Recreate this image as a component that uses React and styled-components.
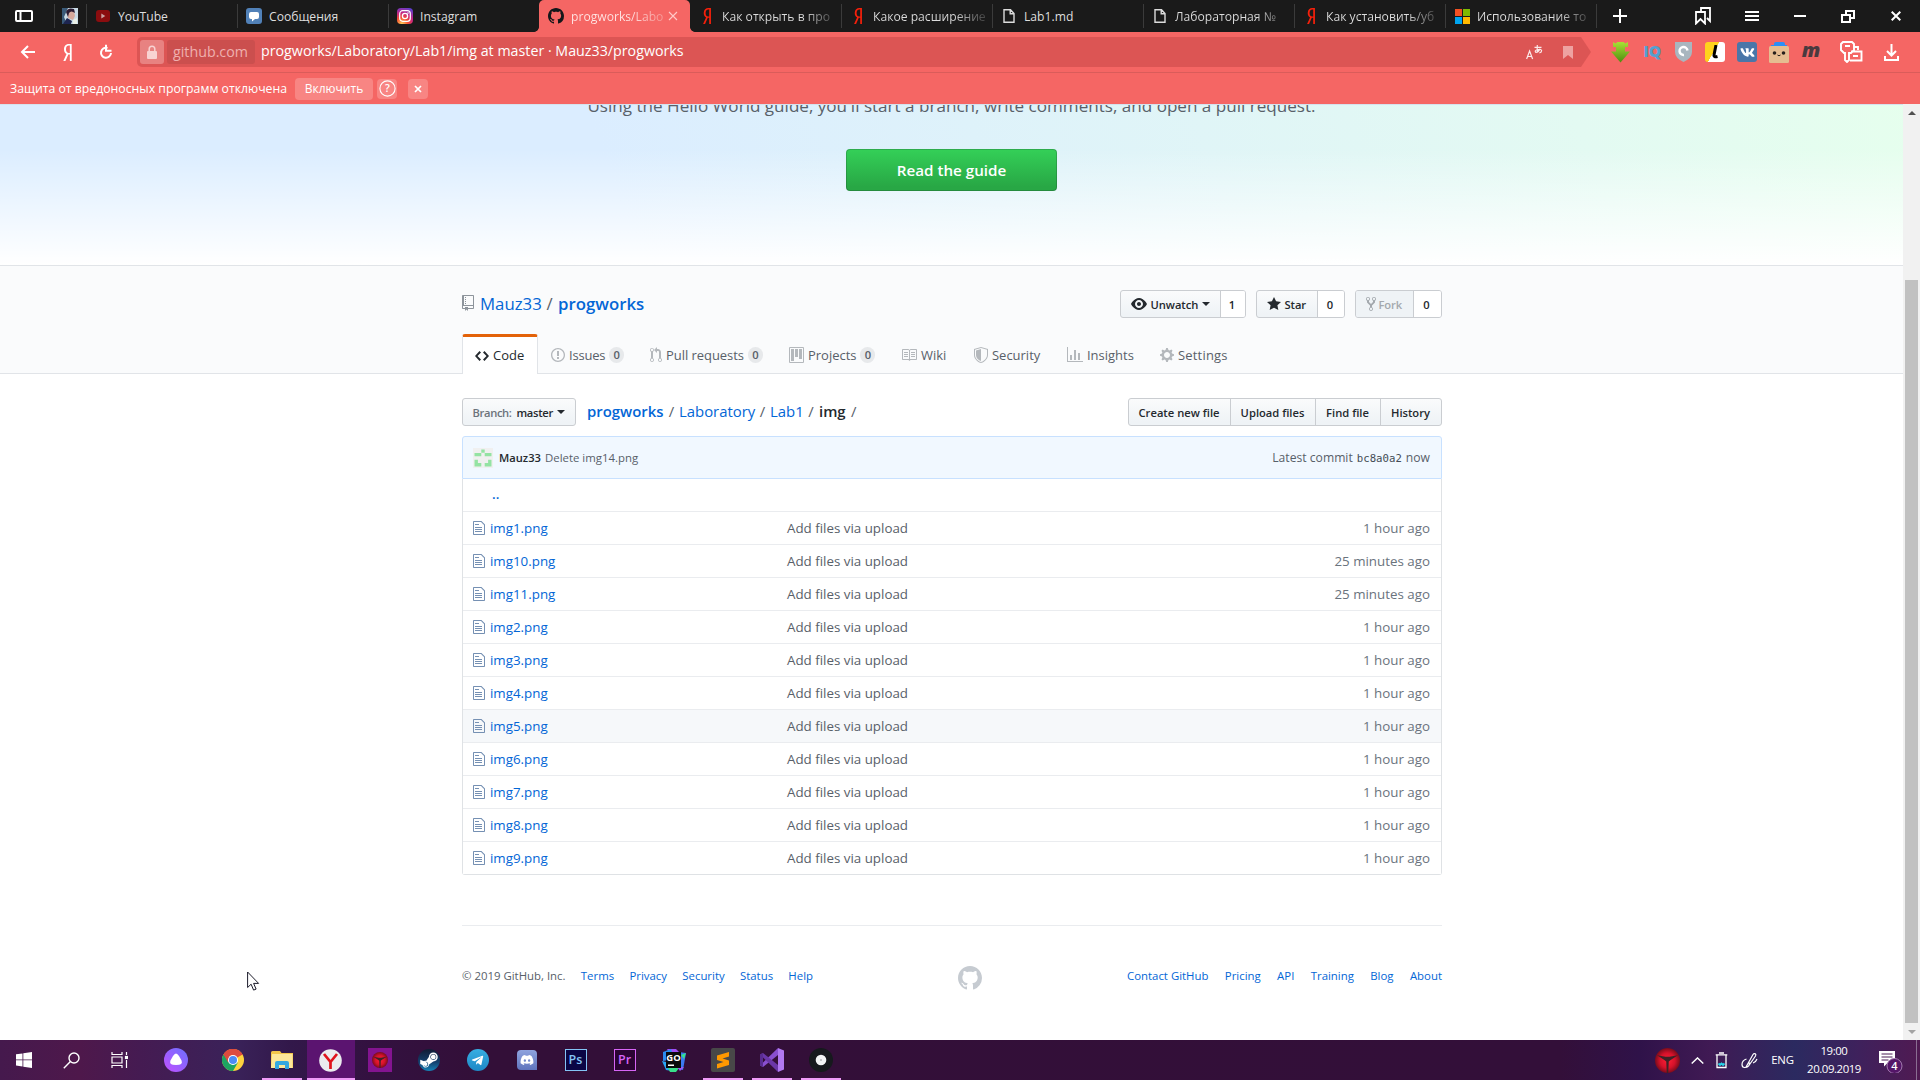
import React from 'react';
import styled, { createGlobalStyle, css } from 'styled-components';
import { FaYandex, FaSteamSymbol, FaTelegramPlane, FaDiscord, FaVk } from 'react-icons/fa';

const Global = createGlobalStyle`
  * { box-sizing: border-box; }
  body { margin: 0; background: #fff; overflow: hidden; }
  svg { display: block; flex: none; }
`;

const Screen = styled.div`
  position: relative;
  width: 1920px;
  height: 1080px;
  display: flex;
  flex-direction: column;
  overflow: hidden;
  font-family: "Open Sans", "Noto Sans", sans-serif;
  white-space: nowrap;
`;

/* ---------- browser chrome ---------- */
const TabStrip = styled.div`
  height: 32px;
  flex: none;
  display: flex;
  background: #1a1a1a;
`;
const PanelToggle = styled.div`
  width: 55px;
  height: 24px;
  margin: 4px 0;
  padding: 6px 0 0 15px;
  border-right: 1px solid #3b3b3b;
`;
const PinnedTab = styled.div`
  width: 31px;
  height: 24px;
  margin: 4px 0;
  padding: 4px 0 0 7px;
`;
const Tab = styled.div`
  position: relative;
  width: 151px;
  height: 32px;
  display: flex;
  align-items: center;
  padding: 0 0 0 9px;
  color: #dedede;
  font-size: 12.15px;
  &::before {
    content: '';
    position: absolute;
    left: 0;
    top: 4px;
    width: 1px;
    height: 24px;
    background: ${p => (p.$noLine ? 'transparent' : '#3b3b3b')};
  }
  ${p => p.$active && css`
    background: #f56664;
    color: #ffe5e4;
    border-radius: 5px 5px 0 0;
    &::before, &::after {
      content: '';
      position: absolute;
      bottom: 0;
      top: auto;
      width: 5px;
      height: 5px;
      left: -5px;
      background: radial-gradient(circle at 0 0, #1a1a1a 4.5px, #f56664 5.2px);
    }
    &::after {
      left: auto;
      right: -5px;
      background: radial-gradient(circle at 100% 0, #1a1a1a 4.5px, #f56664 5.2px);
    }
  `}
`;
const TabIcon = styled.div`
  width: 16px;
  height: 32px;
  display: flex;
  align-items: center;
  justify-content: center;
  flex: none;
`;
const TabTitle = styled.div`
  margin-left: 7px;
  flex: none;
  width: ${p => (p.$short ? 97 : 112)}px;
  line-height: 32px;
  padding-top: 1px;
  ${p => p.$fade && css`
    color: transparent;
    background: linear-gradient(90deg, ${p.$short ? '#ffe5e4 60%, #f79a98 92%' : '#dedede 72%, #4a4a4a 98%'});
    background-clip: text;
    -webkit-background-clip: text;
  `}
`;
const WindowButtons = styled.div`
  flex: 1;
  display: flex;
  align-items: center;
  padding-left: 16px;
  height: 24px;
  margin-top: 4px;
  border-left: 1px solid #3b3b3b;
`;
const WinBtn = styled.div`
  width: ${p => p.$w}px;
  flex: none;
`;

const Toolbar = styled.div`
  height: 41px;
  flex: none;
  display: flex;
  align-items: center;
  background: #f56664;
  border-bottom: 1px solid #da5c5a;
  color: #fff;
`;
const NavButtons = styled.div`
  width: 137px;
  display: flex;
  align-items: center;
  padding-left: 20px;
`;
const NavCell = styled.div`
  width: 41px;
  display: flex;
  & + & + & { padding-left: 1px; }
`;
const AddressBar = styled.div`
  width: 1454px;
  height: 30px;
  display: flex;
  align-items: center;
  background: #dc5554;
  border-radius: 5px 0 0 5px;
  clip-path: polygon(0 0, 1444px 0, 100% 50%, 1444px 100%, 0 100%);
  padding-left: 3px;
  font-size: 14.25px;
`;
const LockBox = styled.div`
  width: 24px;
  height: 24px;
  border-radius: 3px;
  background: #e88281;
  display: flex;
  align-items: center;
  justify-content: center;
`;
const Domain = styled.div`
  width: 88px;
  height: 24px;
  margin-left: 3px;
  border-radius: 3px;
  background: #cb4f4e;
  color: #efb0af;
  line-height: 23px;
  text-align: center;
  padding-right: 1px;
`;
const PageTitle = styled.div`
  margin-left: 6px;
  flex: 1;
  line-height: 28px;
  height: 30px;
`;
const BarIcons = styled.div`
  display: flex;
  align-items: center;
  gap: 20px;
  margin-right: 18px;
`;
const Extensions = styled.div`
  display: flex;
  padding-left: 13px;
`;
const ExtCell = styled.div`
  width: ${p => p.$w || 32}px;
  height: 32px;
  display: flex;
  align-items: center;
  justify-content: center;
`;
const LetterIcon = styled.div`
  font: ${p => p.$font};
  color: ${p => p.$c};
  letter-spacing: ${p => p.$ls || 0}px;
  transform: translateY(${p => p.$dy || 0}px);
`;

const InfoBar = styled.div`
  height: 31px;
  flex: none;
  display: flex;
  align-items: center;
  background: #f56664;
  color: #fff;
  font-size: 12.25px;
  padding-left: 10px;
`;
const InfoText = styled.div`width: 285px;`;
const InfoButton = styled.div`
  width: ${p => p.$w}px;
  height: ${p => p.$h}px;
  margin-right: ${p => p.$gap || 0}px;
  border-radius: 4px;
  background: #f88583;
  font-size: 12px;
  display: flex;
  align-items: center;
  justify-content: center;
`;

/* ---------- page ---------- */
const Viewport = styled.div`
  height: 936px;
  flex: none;
  display: flex;
`;
const Page = styled.div`
  width: 1903px;
  background: #fff;
  overflow: hidden;
`;
const Scrollbar = styled.div`
  width: 17px;
  background: #f1f1f1;
  display: flex;
  flex-direction: column;
  align-items: center;
`;
const ScrollArrow = styled.div`
  width: 17px;
  height: 17px;
  display: flex;
  align-items: center;
  justify-content: center;
`;
const ScrollTrack = styled.div`
  flex: 1;
  padding-top: 159px;
`;
const ScrollThumb = styled.div`
  width: 13px;
  height: 743px;
  background: #c1c1c1;
`;

const Hero = styled.div`
  height: 162px;
  border-bottom: 1px solid #e1e4e8;
  border-top: 1px solid #d5e2ee;
  background:
    linear-gradient(180deg, rgba(255,255,255,0) 60%, #fff) bottom / 100% 290px no-repeat,
    linear-gradient(70deg, #dbedff 32%, #e6ffed) bottom / 100% 290px no-repeat;
  display: flex;
  flex-direction: column;
  align-items: center;
  overflow: hidden;
`;
const HeroText = styled.div`
  margin-top: -12px;
  height: 26px;
  line-height: 26px;
  font-size: 17.08px;
  color: #586069;
  flex: none;
`;
const HeroButton = styled.div`
  margin-top: 30px;
  width: 211px;
  height: 42px;
  border-radius: 4px;
  border: 1px solid rgba(27,31,35,.2);
  background: linear-gradient(180deg, #34d058, #28a745 90%) border-box;
  color: #fff;
  font-weight: 600;
  font-size: 15.2px;
  line-height: 40px;
  text-align: center;
`;
const RepoHead = styled.div`
  height: 108px;
  background: #fafbfc;
  border-bottom: 1px solid #e1e4e8;
  padding: 24px 461px 0 462px;
`;
const HeadTop = styled.div`
  display: flex;
  justify-content: space-between;
  height: 44px;
`;
const RepoTitle = styled.div`
  display: flex;
  align-items: center;
  height: 26px;
  font-size: 16.8px;
  color: #586069;
`;
const Link = styled.span`
  color: #0366d6;
  font-weight: ${p => (p.$b ? 600 : 400)};
  width: ${p => (p.$w ? p.$w + 'px' : 'auto')};
  margin-left: ${p => p.$ml || 0}px;
`;
const Slash = styled.span`
  width: ${p => p.$w || 16}px;
  text-align: center;
`;
const Actions = styled.div`
  display: flex;
  gap: 10px;
`;
const Group = styled.div`
  display: flex;
  height: 28px;
  border: 1px solid #cacdd1;
  border-radius: 3px;
  overflow: hidden;
  background: linear-gradient(180deg, #fafbfc, #eff3f6 90%);
  font-size: 11.2px;
  font-weight: 600;
  color: #24292e;
`;
const Seg = styled.div`
  width: ${p => p.$w}px;
  display: flex;
  align-items: center;
  justify-content: center;
  padding-right: 1px;
  & + & { border-left: 1px solid #cacdd1; }
  ${p => p.$count && css`background: #fff; padding-right: 2px;`}
  ${p => p.$off && css`color: #a3a8ad; background: #eff3f6;`}
`;
const SegText = styled.span`
  width: ${p => p.$w}px;
  margin: 0 ${p => p.$mr || 0}px 0 ${p => p.$ml || 0}px;
  letter-spacing: ${p => p.$ls || 0}px;
  color: ${p => (p.$muted ? '#6c737b' : 'inherit')};
`;
const RepoNav = styled.div`
  display: flex;
  height: 40px;
  font-size: 12.98px;
  color: #586069;
`;
const NavItem = styled.div`
  display: flex;
  align-items: center;
  height: 39px;
  width: ${p => p.$w}px;
  padding: 3px 0 0 ${p => p.$pl || 0}px;
  color: ${p => (p.$on ? '#24292e' : '#586069')};
  ${p => p.$on && css`
    height: 40px;
    padding-top: 0;
    background: #fff;
    border: 1px solid #e1e4e8;
    border-top: 3px solid #e36209;
    border-bottom: 0;
    border-radius: 3px 3px 0 0;
  `}
`;
const NavText = styled.span`
  margin-left: ${p => p.$ml || 4}px;
  letter-spacing: ${p => p.$ls || 0}px;
  padding-bottom: 1px;
`;
const Counter = styled.span`
  margin-left: 4px;
  min-width: 15px;
  height: 16px;
  line-height: 16px;
  border-radius: 10px;
  background: #e7e9eb;
  text-align: center;
  font-size: 11.2px;
  font-weight: 600;
  color: #586069;
`;

const Body = styled.div`
  padding: 24px 461px 0 462px;
`;
const FileNav = styled.div`
  display: flex;
  height: 38px;
`;
const Crumbs = styled.div`
  flex: 1;
  height: 26px;
  display: flex;
  align-items: center;
  font-size: 14.9px;
  color: #586069;
  padding-left: 11px;
`;
const Current = styled.strong`
  font-weight: 600;
  color: #24292e;
`;
const Commit = styled.div`
  display: flex;
  align-items: center;
  height: 43px;
  padding: 0 11px 0 10px;
  background: #f1f8ff;
  border: 1px solid #c8e1ff;
  border-radius: 3px 3px 0 0;
  font-size: 11.4px;
  color: #586069;
`;
const Author = styled.span`
  margin-left: 6px;
  width: 46px;
  font-size: 11.15px;
  font-weight: 600;
  color: #24292e;
`;
const CommitMsg = styled.span`flex: 1;`;
const Latest = styled.span`
  font-size: 12.15px;
`;
const Sha = styled.span`
  font: 10.7px "DejaVu Sans Mono", "Liberation Mono", monospace;
  color: #444d56;
  margin: 0 4px;
`;
const Table = styled.div`
  border: 1px solid #dfe2e5;
  border-top: 0;
  border-radius: 0 0 3px 3px;
`;
const Row = styled.div`
  height: 33px;
  display: grid;
  grid-template-columns: 17px 297px 1fr auto;
  align-items: center;
  padding: 0 11px 0 10px;
  font-size: 13.35px;
  color: #6a737d;
  background: ${p => (p.$hover ? '#f6f8fa' : '#fff')};
  border-top: 1px solid #eaecef;
`;
const UpRow = styled.div`
  height: 32px;
  padding: 0 0 0 29px;
  line-height: 31px;
  font-size: 13.35px;
  font-weight: 600;
  color: #0366d6;
`;
const Message = styled.span`color: #586069;`;
const Footer = styled.div`
  margin-top: 50px;
  border-top: 1px solid #eaecef;
  padding-top: 40px;
  display: flex;
  justify-content: space-between;
  font-size: 11.4px;
  line-height: 20px;
  color: #586069;
`;
const FootLinks = styled.div`
  display: flex;
  width: 351px;
  justify-content: space-between;
`;
const FootRight = styled(FootLinks)`width: 315px;`;

/* ---------- taskbar ---------- */
const Taskbar = styled.div`
  height: 40px;
  flex: none;
  display: flex;
  background: linear-gradient(90deg, #45194d 0, #4e184b 80px, #451b52 140px, #3a2259 235px, #32184a 290px, #331140 370px, #330f38 480px, #330f39 1560px, #2f1249 1640px, #401a54 1710px, #2b2a60 1795px, #3f215c 1860px, #501a52 1920px);
`;
const Task = styled.div`
  width: ${p => p.$w || 49}px;
  height: 40px;
  display: flex;
  align-items: center;
  justify-content: center;
  background:
    linear-gradient(#ef9bf8, #ef9bf8) bottom / ${p => p.$bar || 0}px 2px no-repeat,
    linear-gradient(${p => (p.$tile ? '#5b1470, #5b1470' : 'transparent, transparent')}) center / 48px 40px no-repeat;
`;
const AppTile = styled.div`
  width: ${p => p.$s}px;
  height: ${p => p.$s}px;
  background: ${p => p.$bg};
  border: ${p => p.$border || '0'};
  border-radius: ${p => p.$r || 0};
  color: ${p => p.$c || '#fff'};
  display: flex;
  align-items: center;
  justify-content: center;
  font-size: 12.5px;
  line-height: 16px;
  font-weight: 600;
`;
const Tray = styled.div`
  flex: 1;
  display: flex;
  align-items: center;
  justify-content: flex-end;
  color: #fff;
`;
const TrayCell = styled.div`
  width: ${p => p.$w}px;
  display: flex;
  justify-content: center;
`;
const Lang = styled.div`
  width: 27px;
  text-align: center;
  font-size: 11.4px;
  letter-spacing: -0.3px;
  padding-bottom: 1px;
`;
const Clock = styled.div`
  width: 76px;
  text-align: center;
  font-size: 11.4px;
  letter-spacing: -0.42px;
  line-height: 18px;
`;
const ShowDesktop = styled.div`
  width: 4px;
  height: 40px;
  margin-left: 6px;
  border-left: 1px solid #8a6d92;
`;
const Pointer = styled.div`
  position: absolute;
  left: 247px;
  top: 971px;
`;

/* ---------- icons ---------- */
const P = {
  repo: [12, 'M4 9H3V8h1v1zm0-3H3v1h1V6zm0-2H3v1h1V4zm0-2H3v1h1V2zm8-1v12c0 .55-.45 1-1 1H6v2l-1.5-1.5L3 16v-2H1c-.55 0-1-.45-1-1V1c0-.55.45-1 1-1h10c.55 0 1 .45 1 1zm-1 10H1v2h2v-1h3v1h5v-2zm0-10H2v9h9V1z'],
  code: [14, 'M9.5 3L8 4.5 11.5 8 8 11.5 9.5 13 14 8 9.5 3zm-5 0L0 8l4.5 5L6 11.5 2.5 8 6 4.5 4.5 3z'],
  issue: [14, 'M7 2.3c3.14 0 5.7 2.56 5.7 5.7s-2.56 5.7-5.7 5.7A5.71 5.71 0 0 1 1.3 8c0-3.14 2.56-5.7 5.7-5.7zM7 1C3.14 1 0 4.14 0 8s3.14 7 7 7 7-3.14 7-7-3.14-7-7-7zm1 3H6v5h2V4zm0 6H6v2h2v-2z'],
  pr: [12, 'M11 11.28V5c-.03-.78-.34-1.47-.94-2.06C9.46 2.35 8.78 2.03 8 2H7V0L4 3l3 3V4h1c.27.02.48.11.69.31.21.2.3.42.31.69v6.28A1.993 1.993 0 0 0 10 15a1.993 1.993 0 0 0 1-3.72zm-1 2.92c-.66 0-1.2-.55-1.2-1.2 0-.65.55-1.2 1.2-1.2.65 0 1.2.55 1.2 1.2 0 .65-.55 1.2-1.2 1.2zM4 3c0-1.11-.89-2-2-2a1.993 1.993 0 0 0-1 3.72v6.56A1.993 1.993 0 0 0 2 15a1.993 1.993 0 0 0 1-3.72V4.72c.59-.34 1-.98 1-1.72zm-.8 10c0 .66-.55 1.2-1.2 1.2-.65 0-1.2-.55-1.2-1.2 0-.65.55-1.2 1.2-1.2.65 0 1.2.55 1.2 1.2zM2 4.2C1.34 4.2.8 3.65.8 3c0-.65.55-1.2 1.2-1.2.65 0 1.2.55 1.2 1.2 0 .65-.55 1.2-1.2 1.2z'],
  project: [15, 'M10 12h3V2h-3v10zm-4-2h3V2H6v8zm-4 4h3V2H2v12zm-1 1h13V1H1v14zM14 0H1a1 1 0 0 0-1 1v14a1 1 0 0 0 1 1h13a1 1 0 0 0 1-1V1a1 1 0 0 0-1-1z'],
  book: [16, 'M3 5h4v1H3V5zm0 3h4V7H3v1zm0 2h4V9H3v1zm11-5h-4v1h4V5zm0 2h-4v1h4V7zm0 2h-4v1h4V9zm2-6v9c0 .55-.45 1-1 1H9.5l-1 1-1-1H2c-.55 0-1-.45-1-1V3c0-.55.45-1 1-1h5.5l1 1 1-1H15c.55 0 1 .45 1 1zm-8 .5L7.5 3H2v9h6V3.5zm7-.5H9.5l-.5.5V12h6V3z'],
  shield: [14, 'M0 2l7-2 7 2v6.02C14 12.69 8.69 16 7 16c-1.69 0-7-3.31-7-7.98V2zm1 .75L7 1l6 1.75v5.268C13 12.104 8.449 15 7 15c-1.449 0-6-2.896-6-6.982V2.75zm1 .75L7 2v12c-1.207 0-5-2.482-5-5.985V3.5z'],
  graph: [16, 'M16 14v1H0V0h1v14h15zM5 13H3V8h2v5zm4 0H7V3h2v10zm4 0h-2V6h2v7z'],
  gear: [14, 'M14 8.77v-1.6l-1.94-.64-.45-1.09.88-1.84-1.13-1.13-1.81.91-1.09-.45-.69-1.92h-1.6l-.63 1.94-1.11.45-1.84-.88-1.13 1.13.91 1.81-.45 1.09L0 7.23v1.59l1.94.64.45 1.09-.88 1.84 1.13 1.13 1.81-.91 1.09.45.69 1.92h1.59l.63-1.94 1.11-.45 1.84.88 1.13-1.13-.92-1.81.47-1.09L14 8.75v.02zM7 11c-1.66 0-3-1.34-3-3s1.34-3 3-3 3 1.34 3 3-1.34 3-3 3z'],
  eye: [16, 'M8.06 2C3 2 0 8 0 8s3 6 8.06 6C13 14 16 8 16 8s-3-6-7.94-6zM8 12c-2.2 0-4-1.78-4-4 0-2.2 1.8-4 4-4 2.22 0 4 1.8 4 4 0 2.22-1.78 4-4 4zm2-4c0 1.11-.89 2-2 2-1.11 0-2-.89-2-2 0-1.11.89-2 2-2 1.11 0 2 .89 2 2z'],
  star: [14, 'M14 6l-4.9-.64L7 1 4.9 5.36 0 6l3.6 3.26L2.67 14 7 11.67 11.33 14l-.93-4.74L14 6z'],
  fork: [10, 'M8 1a1.993 1.993 0 0 0-1 3.72V6L5 8 3 6V4.72A1.993 1.993 0 0 0 2 1a1.993 1.993 0 0 0-1 3.72V6.5l3 3v1.78A1.993 1.993 0 0 0 5 15a1.993 1.993 0 0 0 1-3.72V9.5l3-3V4.72A1.993 1.993 0 0 0 8 1zM2 4.2C1.34 4.2.8 3.65.8 3c0-.65.55-1.2 1.2-1.2.65 0 1.2.55 1.2 1.2 0 .65-.55 1.2-1.2 1.2zm3 10c-.66 0-1.2-.55-1.2-1.2 0-.65.55-1.2 1.2-1.2.65 0 1.2.55 1.2 1.2 0 .65-.55 1.2-1.2 1.2zm3-10c-.66 0-1.2-.55-1.2-1.2 0-.65.55-1.2 1.2-1.2.65 0 1.2.55 1.2 1.2 0 .65-.55 1.2-1.2 1.2z'],
  file: [12, 'M6 5H2V4h4v1zM2 8h7V7H2v1zm0 2h7V9H2v1zm0 2h7v-1H2v1zm10-7.5V14c0 .55-.45 1-1 1H1c-.55 0-1-.45-1-1V2c0-.55.45-1 1-1h7.5L12 4.5zM11 5L8 2H1v12h10V5z'],
  mark: [16, 'M8 0C3.58 0 0 3.58 0 8c0 3.54 2.29 6.53 5.47 7.59.4.07.55-.17.55-.38 0-.19-.01-.82-.01-1.49-2.01.37-2.53-.49-2.69-.94-.09-.23-.48-.94-.82-1.13-.28-.15-.68-.52-.01-.53.63-.01 1.08.58 1.23.82.72 1.21 1.87.87 2.33.66.07-.52.28-.87.51-1.07-1.78-.2-3.64-.89-3.64-3.95 0-.87.31-1.59.82-2.15-.08-.2-.36-1.02.08-2.12 0 0 .67-.21 2.2.82.64-.18 1.32-.27 2-.27.68 0 1.36.09 2 .27 1.53-1.04 2.2-.82 2.2-.82.44 1.1.16 1.92.08 2.12.51.56.82 1.27.82 2.15 0 3.07-1.87 3.75-3.65 3.95.29.25.54.73.54 1.48 0 1.07-.01 1.93-.01 2.2 0 .21.15.46.55.38A8.013 8.013 0 0 0 16 8c0-4.42-3.58-8-8-8z'],
};
const Oct = ({ n, c = 'currentColor', k = 1 }) => (
  <svg width={P[n][0] * k} height={16 * k} viewBox={`0 0 ${P[n][0]} 16`} fill={c} fillRule="evenodd"><path d={P[n][1]} /></svg>
);
const Line = ({ w = 16, h = 16, s = 2, c = '#fff', children }) => (
  <svg width={w} height={h} viewBox={`0 0 ${w} ${h}`} fill="none" stroke={c} strokeWidth={s}>{children}</svg>
);
const Caret = () => <svg width="8" height="4" viewBox="0 0 8 4"><path d="M0 0h8L4 4z" fill="#24292e" /></svg>;
const Doc = () => <Line w={12} h={16} s={1.4} c="#dcdcdc"><path d="M1 1.7h6.5L11 5.5v8.8H1zM7.2 1.7v4H11" /></Line>;
const RedYa = () => <FaYandex size={16} color="#f5200b" />;
const YouTube = () => <svg width="14" height="12"><rect width="14" height="12" rx="3" fill="#8b0d0f" /><path d="M5.3 3.6v4.8L9.3 6z" fill="#c9a3a3" /></svg>;
const Chat = () => <svg width="16" height="16"><rect width="16" height="16" rx="3" fill="#5181b8" /><path d="M5 4h6q2 0 2 2v3q0 2-2 2H9l-3 2.6V11H5q-2 0-2-2V6q0-2 2-2z" fill="#fff" /></svg>;
const Insta = () => (
  <svg width="16" height="16">
    <defs><radialGradient id="ig" cx=".3" cy="1" r="1.1"><stop offset="0" stopColor="#ffd15c" /><stop offset=".35" stopColor="#f5502f" /><stop offset=".62" stopColor="#c9257f" /><stop offset="1" stopColor="#5b3fd0" /></radialGradient></defs>
    <rect width="16" height="16" rx="4" fill="url(#ig)" />
    <rect x="2.7" y="2.7" width="10.6" height="10.6" rx="3" fill="none" stroke="#fff" strokeWidth="1.2" />
    <circle cx="8" cy="8" r="2.6" fill="none" stroke="#fff" strokeWidth="1.3" /><circle cx="11" cy="5" r=".8" fill="#fff" />
  </svg>
);
const Windows4 = () => <svg width="15" height="15"><path d="M0 0h7v7H0z" fill="#f25022" /><path d="M8 0h7v7H8z" fill="#7fba00" /><path d="M0 8h7v7H0z" fill="#00a4ef" /><path d="M8 8h7v7H8z" fill="#ffb900" /></svg>;
const Portrait = () => (
  <svg width="16" height="16">
    <rect width="16" height="16" fill="#c9dbe6" /><path d="M0 0h6L2 9l3 7H0z" fill="#3a5a78" /><path d="M5 2q4-3 7 1l1 5-2 4-5-2z" fill="#d6a99c" />
    <path d="M4 4q2-5 8-3l1 4q-4-3-6 0l-1 4z" fill="#2b1c33" /><path d="M1 16l4-6 5 3-1 3z" fill="#1d2550" /><path d="M11 12l4-2v6h-4z" fill="#e9efe6" />
  </svg>
);
const RedT = ({ s = 24 }) => (
  <svg width={s} height={s} viewBox="0 0 24 24">
    <defs><radialGradient id="rt"><stop offset="0" stopColor="#ff1f35" /><stop offset=".6" stopColor="#d5122a" /><stop offset="1" stopColor="#7a0c1c" /></radialGradient></defs>
    <circle cx="12" cy="12" r="12" fill="url(#rt)" /><path d="M2 7l8 1.5h4L22 7l-7 4.5L13.2 13l-.5 11h-1.4l-.5-11L9 11.5z" fill="#3d2226" />
  </svg>
);

const TABS = [
  { i: <YouTube />, t: 'YouTube' },
  { i: <Chat />, t: 'Сообщения' },
  { i: <Insta />, t: 'Instagram' },
  { i: <Oct n="mark" c="#14171a" />, t: 'progworks/Labo', active: true },
  { i: <RedYa />, t: 'Как открыть в про', fade: true, noLine: true },
  { i: <RedYa />, t: 'Какое расширение', fade: true },
  { i: <Doc />, t: 'Lab1.md' },
  { i: <Doc />, t: 'Лабораторная №', fade: true },
  { i: <RedYa />, t: 'Как установить/уб', fade: true },
  { i: <Windows4 />, t: 'Использование то', fade: true },
];

const FILES = [
  ['img1.png', '1 hour ago'], ['img10.png', '25 minutes ago'], ['img11.png', '25 minutes ago'],
  ['img2.png', '1 hour ago'], ['img3.png', '1 hour ago'], ['img4.png', '1 hour ago'],
  ['img5.png', '1 hour ago', true], ['img6.png', '1 hour ago'], ['img7.png', '1 hour ago'],
  ['img8.png', '1 hour ago'], ['img9.png', '1 hour ago'],
];

const G = '#b4b8bc';

export default function App() {
  return (
    <Screen>
      <Global />
      <TabStrip>
        <PanelToggle><Line w={18} h={12}><rect x="1" y="1" width="16" height="10" rx="1" /><path d="M5.5 1v10" /></Line></PanelToggle>
        <PinnedTab><Portrait /></PinnedTab>
        {TABS.map((t, k) => (
          <Tab key={k} $active={t.active} $noLine={t.noLine}>
            <TabIcon>{t.i}</TabIcon>
            <TabTitle $fade={t.fade || t.active} $short={t.active}>{t.t}</TabTitle>
            {t.active && <Line w={10} h={10} s={1.1} c="#ffc9c8"><path d="M1 1l8 8M9 1l-8 8" /></Line>}
          </Tab>
        ))}
        <WindowButtons>
          <WinBtn $w={82}><Line w={14} h={14}><path d="M7 0v14M0 7h14" /></Line></WinBtn>
          <WinBtn $w={50}><Line w={16} h={18} s={1.8}><path d="M6 4V1h9v13l-3-3M1 5h9v11.5L5.5 12 1 16.5z" /></Line></WinBtn>
          <WinBtn $w={49}><Line w={14} h={12}><path d="M0 2h14M0 6h14M0 10h14" /></Line></WinBtn>
          <WinBtn $w={47}><Line w={12} h={12}><path d="M0 6h12" /></Line></WinBtn>
          <WinBtn $w={50}><Line w={14} h={13}><path d="M1 5h8v7H1zM5 5V1h8v7H9" /></Line></WinBtn>
          <WinBtn $w={12}><Line w={10} h={10}><path d="M.7.7l8.6 8.6M9.3.7L.7 9.3" /></Line></WinBtn>
        </WindowButtons>
      </TabStrip>

      <Toolbar>
        <NavButtons>
          <NavCell><Line w={15} h={14}><path d="M15 7H2M8 1L2 7l6 6" /></Line></NavCell>
          <NavCell><FaYandex size={17} /></NavCell>
          <NavCell><Line w={14} h={16}><path d="M8.5 4A5 5 0 1 0 12 9" /><path d="M7 .8v6h5.5" /></Line></NavCell>
        </NavButtons>
        <AddressBar>
          <LockBox><svg width="12" height="14"><rect x="1" y="6" width="10" height="8" rx="1" fill="#f8d3d2" /><path d="M3.2 6.5V4a2.8 2.8 0 0 1 5.6 0v2.5" fill="none" stroke="#f8d3d2" strokeWidth="1.5" /></svg></LockBox>
          <Domain>github.com</Domain>
          <PageTitle>progworks/Laboratory/Lab1/img at master · Mauz33/progworks</PageTitle>
          <BarIcons>
            <Line w={17} h={16} s={1.2} c="#fbe9e9">
              <path d="M.6 15L3.600 7l3 8M1.600 12.500h4" />
              <path d="M8.5 3.3h7M11.3 1q-.5 4 .6 7.500M14 4.800q-1.500 3.500-4.200 3.600-1.600-1.400 1.200-2.700 4.200-1.200 4.600 1 .1 1.700-2.200 2.200" />
            </Line>
            <svg width="10" height="13"><path d="M0 0h10v13L5 9l-5 4z" fill="#eea2a1" /></svg>
          </BarIcons>
        </AddressBar>
        <Extensions>
          <ExtCell><svg width="19" height="21"><defs><linearGradient id="gr" x2="0" y2="1"><stop stopColor="#a8e234" /><stop offset="1" stopColor="#4f8c10" /></linearGradient></defs><path d="M2 0l2.500 1.500L6.500 0h6l2 1.500L17 0v5h-3v4.500h5L9.500 20.500 0 9.500h5V5H2z" fill="url(#gr)" /></svg></ExtCell>
          <ExtCell><LetterIcon $font='800 16px "Open Sans", sans-serif' $c="#55a0d0" $ls={-0.5} $dy={-1}>IQ</LetterIcon></ExtCell>
          <ExtCell $w={30}><svg width="17" height="20"><path d="M0 0h17v10q0 6-8.500 10Q0 16 0 10z" fill="#a9b6bf" /><path d="M12.500 8.500A4 4 0 1 0 9 13" fill="none" stroke="#fff" strokeWidth="2.400" /></svg></ExtCell>
          <ExtCell $w={34}><AppTile $s={20} $r="3px" $bg="linear-gradient(120deg,#ffd21c 45%,#fff 46%)"><Line w={10} h={14} s={3} c="#000"><path d="M6 0L4 10q-.3 2.500 3.500 1.500" /></Line></AppTile></ExtCell>
          <ExtCell $w={30}><AppTile $s={20} $r="3px" $bg="#4a76a8"><FaVk size={15} /></AppTile></ExtCell>
          <ExtCell $w={34}><svg width="20" height="21"><rect x="5" width="11" height="5" rx="2" fill="#2a8ff7" /><rect x="2" y="3" width="16" height="2" fill="#2a8ff7" /><rect y="4" width="20" height="17" rx="1.5" fill="#e5bd91" /><circle cx="5.5" cy="11" r="1.800" fill="#26201c" /><circle cx="14.5" cy="11" r="1.800" fill="#26201c" /><path d="M8.500 13q1.500 1.600 3 0" stroke="#26201c" fill="none" /></svg></ExtCell>
          <ExtCell $w={30}><LetterIcon $font='italic 800 20px "Open Sans", sans-serif' $c="#4b3a3f" $dy={-3}>m</LetterIcon></ExtCell>
          <ExtCell $w={50}><Line w={23} h={22} s={1.9}><path d="M3 1h9l2 2v6l-3 3H9v7l-2 2-2-2v-7H4L1 9V3zM5 5h5M14 6h4v3M11 10.500h10.500v9H10M13 15h5" /></Line></ExtCell>
          <ExtCell $w={31}><Line w={15} h={17}><path d="M7.500 0v11M3 7l4.500 4.500L12 7M1 12v4h13v-4" /></Line></ExtCell>
        </Extensions>
      </Toolbar>

      <InfoBar>
        <InfoText>Защита от вредоносных программ отключена</InfoText>
        <InfoButton $w={78} $h={22} $gap={4}>Включить</InfoButton>
        <InfoButton $w={20} $h={20} $gap={11}>
          <svg width="17" height="17"><circle cx="8.500" cy="8.500" r="7.600" fill="none" stroke="#fff" strokeWidth="1.100" /><text x="8.500" y="12.300" textAnchor="middle" fontSize="10.500" fontWeight="600" fill="#fff">?</text></svg>
        </InfoButton>
        <InfoButton $w={20} $h={20}><Line w={8} h={8} s={1.7}><path d="M1 1l6 6M7 1L1 7" /></Line></InfoButton>
      </InfoBar>

      <Viewport>
        <Page>
          <Hero>
            <HeroText>Using the Hello World guide, you'll start a branch, write comments, and open a pull request.</HeroText>
            <HeroButton>Read the guide</HeroButton>
          </Hero>
          <RepoHead>
            <HeadTop>
              <RepoTitle>
                <Oct n="repo" c="#8d949b" />
                <Link $ml={6} $w={61}>Mauz33</Link><Slash $w={17}>/</Slash><Link $b>progworks</Link>
              </RepoTitle>
              <Actions>
                <Group>
                  <Seg $w={99}><Oct n="eye" /><SegText $w={47} $ml={4} $mr={4} $ls={-0.05}>Unwatch</SegText><Caret /></Seg>
                  <Seg $w={25} $count>1</Seg>
                </Group>
                <Group>
                  <Seg $w={60}><Oct n="star" /><SegText $w={22} $ml={4} $ls={-0.1}>Star</SegText></Seg>
                  <Seg $w={27} $count>0</Seg>
                </Group>
                <Group>
                  <Seg $w={57} $off><Oct n="fork" /><SegText $w={24} $ml={3} $ls={-0.1}>Fork</SegText></Seg>
                  <Seg $w={28} $count>0</Seg>
                </Group>
              </Actions>
            </HeadTop>
            <RepoNav>
              <NavItem $on $w={76} $pl={12}><Oct n="code" /><NavText>Code</NavText></NavItem>
              <NavItem $w={99} $pl={13}><Oct n="issue" c={G} /><NavText $ls={-0.2}>Issues</NavText><Counter>0</Counter></NavItem>
              <NavItem $w={139} $pl={13}><Oct n="pr" c={G} /><NavText $ls={-0.03}>Pull requests</NavText><Counter>0</Counter></NavItem>
              <NavItem $w={113} $pl={13}><Oct n="project" c={G} /><NavText>Projects</NavText><Counter>0</Counter></NavItem>
              <NavItem $w={72} $pl={12}><Oct n="book" c={G} /><NavText>Wiki</NavText></NavItem>
              <NavItem $w={93} $pl={13}><Oct n="shield" c={G} /><NavText>Security</NavText></NavItem>
              <NavItem $w={93} $pl={13}><Oct n="graph" c={G} /><NavText>Insights</NavText></NavItem>
              <NavItem $w={90} $pl={13}><Oct n="gear" c={G} /><NavText $ls={0.2}>Settings</NavText></NavItem>
            </RepoNav>
          </RepoHead>

          <Body>
            <FileNav>
              <Group>
                <Seg $w={112}><SegText $w={40} $muted $ls={-0.35}>Branch:</SegText><SegText $w={36} $ml={4} $mr={4} $ls={-0.3}>master</SegText><Caret /></Seg>
              </Group>
              <Crumbs>
                <Link $b $w={77}>progworks</Link><Slash $w={15}>/</Slash>
                <Link $w={76}>Laboratory</Link><Slash $w={15}>/</Slash>
                <Link $w={33}>Lab1</Link><Slash $w={16}>/</Slash>
                <Current>img</Current><Slash>/</Slash>
              </Crumbs>
              <Group>
                <Seg $w={101}>Create new file</Seg>
                <Seg $w={85}>Upload files</Seg>
                <Seg $w={65}>Find file</Seg>
                <Seg $w={61}>History</Seg>
              </Group>
            </FileNav>

            <Commit>
              <svg width="20" height="20" viewBox="0 0 20 20"><rect width="20" height="20" fill="#f0f0f0" /><path d="M8.3 1.5h3.400v3.300H8.300zM1.500 4.900h6.800v3.300H1.500zM11.700 4.900h6.800v3.300h-6.800zM1.500 11.700h3.400v3.400h3.400v3.400H1.500zM15.100 11.700h3.400v6.800h-6.800v-3.400h3.400z" fill="#94e3a3" /></svg>
              <Author>Mauz33</Author>
              <CommitMsg>Delete img14.png</CommitMsg>
              <Latest>Latest commit<Sha>bc8a0a2</Sha>now</Latest>
            </Commit>
            <Table>
              <UpRow>..</UpRow>
              {FILES.map(([n, a, h]) => (
                <Row key={n} $hover={h}>
                  <Oct n="file" c="#7590b3" /><Link>{n}</Link><Message>Add files via upload</Message><span>{a}</span>
                </Row>
              ))}
            </Table>

            <Footer>
              <FootLinks>
                <span>© 2019 GitHub, Inc.</span>
                {['Terms', 'Privacy', 'Security', 'Status', 'Help'].map(t => <Link key={t}>{t}</Link>)}
              </FootLinks>
              <Oct n="mark" c="#c6cbd1" k={1.5} />
              <FootRight>
                {['Contact GitHub', 'Pricing', 'API', 'Training', 'Blog', 'About'].map(t => <Link key={t}>{t}</Link>)}
              </FootRight>
            </Footer>
          </Body>
        </Page>
        <Scrollbar>
          <ScrollArrow><svg width="8" height="4"><path d="M0 4h8L4 0z" fill="#505050" /></svg></ScrollArrow>
          <ScrollTrack><ScrollThumb /></ScrollTrack>
          <ScrollArrow><svg width="8" height="4"><path d="M0 0h8L4 4z" fill="#a3a3a3" /></svg></ScrollArrow>
        </Scrollbar>
      </Viewport>

      <Taskbar>
        <Task $w={48}><svg width="16" height="16"><path d="M0 2.300l6.500-.9v6.100H0zM7.300 1.300L16 0v7.500H7.300zM0 8.300h6.500v6.200L0 13.600zM7.300 8.300H16V16l-8.700-1.300z" fill="#fff" /></svg></Task>
        <Task $w={47}><Line w={17} h={17} s={1.4}><circle cx="11" cy="6" r="5" /><path d="M7.400 9.600L.8 16.200" /></Line></Task>
        <Task $w={48}><Line w={17} h={16} s={1.2}><path d="M1 0v2.500h10V0M1 16v-2.500h10V16M1 5h10v6H1zM15.500 0v3M15.500 8v8" /><rect x="14.500" y="4.500" width="2" height="2" fill="#fff" /></Line></Task>
        <Task $w={65}>
          <svg width="24" height="24"><defs><linearGradient id="al" x2="1" y2="0" y1="1"><stop stopColor="#c350ff" /><stop offset="1" stopColor="#6a70ff" /></linearGradient></defs><circle cx="12" cy="12" r="12" fill="url(#al)" /><path d="M12 5.500q1.500 0 3 2.500l2.500 4.500q2 4.500-5.500 4.500t-5.500-4.500L9 8q1.500-2.500 3-2.500z" fill="#fff" /></svg>
        </Task>
        <Task>
          <svg width="22" height="22" viewBox="0 0 48 48"><circle cx="24" cy="24" r="24" fill="#fdd23e" /><path d="M24 24L3.200 12A24 24 0 0 1 44.800 12z" fill="#dd4b3e" /><path d="M3.200 12A24 24 0 0 0 24 48l10.400-18L24 24z" fill="#1da462" /><path d="M24 13h21.300A24 24 0 0 0 3.200 12l10.600 18z" fill="#dd4b3e" /><circle cx="24" cy="24" r="11" fill="#fff" /><circle cx="24" cy="24" r="8.800" fill="#4c8bf5" /></svg>
        </Task>
        <Task $bar={40}>
          <svg width="22" height="19"><path d="M0 1.500Q0 0 1.500 0H9l1.500 2H22v15H0z" fill="#f3c64b" /><path d="M1 3h20.500v14H0z" fill="#fde79a" /><path d="M4 18v-6q0-2 2-2h10q2 0 2 2v6h-4v-4H8v4z" fill="#35a8e0" /></svg>
        </Task>
        <Task $bar={48} $tile>
          <svg width="23" height="23"><circle cx="11.500" cy="11.500" r="11.300" fill="#ebebee" /><path d="M5 5l6.500 8V20M18 5l-6.500 8" stroke="#e0131c" strokeWidth="2.700" fill="none" /></svg>
        </Task>
        <Task><AppTile $s={24} $bg="#831490"><RedT s={16} /></AppTile></Task>
        <Task><AppTile $s={22} $r="50%" $bg="linear-gradient(180deg,#111b34,#14406e 60%,#1583b8)"><FaSteamSymbol size={20} /></AppTile></Task>
        <Task><AppTile $s={22} $r="50%" $bg="linear-gradient(180deg,#37aee2,#1e88c6)"><FaTelegramPlane size={13} /></AppTile></Task>
        <Task>
          <AppTile $s={20} $r="4px 4px 0 4px" $bg="linear-gradient(180deg,#8fa3de,#5f74bd)"><FaDiscord size={14} /></AppTile>
        </Task>
        <Task><AppTile $s={22} $bg="#0b0645" $border="1.500px solid #84c4f5" $c="#84c4f5">Ps</AppTile></Task>
        <Task><AppTile $s={22} $bg="#2b0433" $border="1.500px solid #d665f5" $c="#d665f5">Pr</AppTile></Task>
        <Task>
          <svg width="24" height="24"><path d="M5 1h9l3 3-6 7z" fill="#a04df5" /><path d="M1 4l8-3 3 10-11 2z" fill="#2b8df0" /><path d="M17 4l7 1-3 17-10-3z" fill="#3b7bf2" /><path d="M19 7l5-2-2 6z" fill="#35e38a" /><path d="M0 13l8 2 2 8-6-1z" fill="#2aa6f5" /><path d="M6 20h11l-3 4H8z" fill="#38e08a" /><path d="M15 19h7l-4 4z" fill="#9b58f8" /><rect x="4" y="4" width="15" height="16" fill="#0a0a0c" /><rect x="6" y="16.500" width="6" height="1.500" fill="#fff" /><text x="11.500" y="12.500" textAnchor="middle" fontSize="9.500" fontWeight="700" fill="#fff">GO</text></svg>
        </Task>
        <Task $bar={40}>
          <svg width="24" height="24"><rect width="24" height="24" rx="2" fill="#484848" /><path d="M18 4v4.500L11.500 10.500l6.500 2v4.500L6 20.500V16l6.500-2L6 12V7.500z" fill="#ff9800" /></svg>
        </Task>
        <Task $bar={40}>
          <svg width="24" height="24"><path d="M18 0l6 2.500v19L18 24z" fill="#b179f1" /><path d="M18 0v7L3 19l-3-1.500L18 0z" fill="#8a4fd0" /><path d="M18 24v-7L3 5 0 6.500z" fill="#6b37a8" /><path d="M0 6.500L3 5v14l-3-1.500z" fill="#5a2d91" /></svg>
        </Task>
        <Task $bar={40}>
          <svg width="24" height="24"><circle cx="12" cy="12" r="12" fill="#16191d" /><circle cx="12" cy="12" r="5.300" fill="#f2f4f5" /><circle cx="12" cy="12" r="1" fill="#b5b8ba" /></svg>
        </Task>
        <Tray>
          <TrayCell $w={28}><RedT s={25} /></TrayCell>
          <TrayCell $w={32}><Line w={13} h={7} s={1.4}><path d="M.7 6.500l5.800-5.600 5.800 5.600" /></Line></TrayCell>
          <TrayCell $w={17}><Line w={13} h={17} s={1.3}><path d="M4 1h5M.7 2.800h11.600M2 3.500v12h9v-12" /><path d="M3.500 11.500l1.500 1.500 1.500-1.500L8 13l1.500-1.500" stroke="#25d5e8" strokeWidth="1.800" /></Line></TrayCell>
          <TrayCell $w={39}><Line w={17} h={17} s={1.2}><path d="M5 15L12 2.500q1-1.500 2.300-.7 1 .8.200 2.200L7.500 14zM5.500 7Q1 8.500 1 12.500q0 3 2.500 3 5 .2 5-5M12 11q3-1 4-4" /></Line></TrayCell>
          <Lang>ENG</Lang>
          <Clock>19:00<br />20.09.2019</Clock>
          <TrayCell $w={38}>
            <svg width="26" height="26" viewBox="0 0 26 26"><path d="M1 4h16v12H9.500L6 19.500V16H1z" fill="#fff" /><path d="M3.500 7h11M3.500 10h11M3.500 13h7" stroke="#4a1d55" strokeWidth="1" /><circle cx="16.500" cy="19" r="7.500" fill="#541668" stroke="#a47bb0" /><text x="16.500" y="23" textAnchor="middle" fontSize="11" fontWeight="600" fill="#fff">4</text></svg>
          </TrayCell>
          <ShowDesktop />
        </Tray>
      </Taskbar>

      <Pointer>
        <svg width="13" height="20"><path d="M.6 1v15.500l3.500-3.300 2.500 5.900 2.500-1-2.500-5.700h5z" fill="#fff" stroke="#1b1b2a" strokeWidth="1" /></svg>
      </Pointer>
    </Screen>
  );
}
